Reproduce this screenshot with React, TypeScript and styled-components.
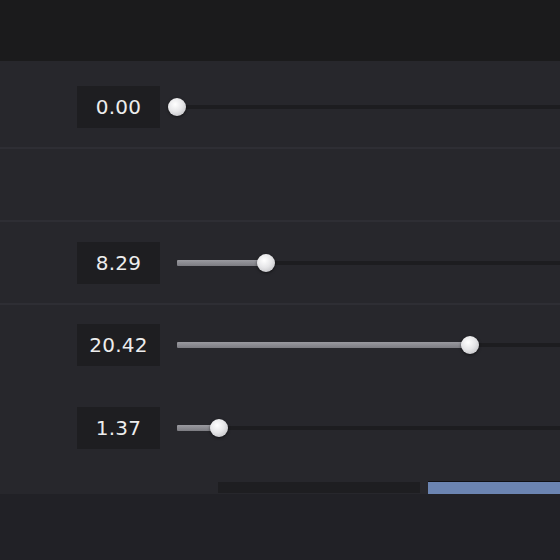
import React from "react"
import styled, { createGlobalStyle } from "styled-components"

const GlobalStyle = createGlobalStyle`
  html, body {
    margin: 0;
    padding: 0;
    background: #212126;
  }
  body {
    width: 560px;
    height: 560px;
    overflow: hidden;
    font-family: "DejaVu Sans", "Liberation Sans", sans-serif;
  }
`

const Page = styled.div`
  width: 560px;
  height: 560px;
  display: flex;
  flex-direction: column;
  overflow: hidden;
  background: #212126;
`

const TopBar = styled.div`
  height: 61px;
  flex-shrink: 0;
  background: #1b1b1c;
`

const Panel = styled.div`
  display: flex;
  flex-direction: column;
  background: #27272c;
`

const Section = styled.div<{ $height: number; $divider?: boolean }>`
  height: ${p => p.$height}px;
  flex-shrink: 0;
  display: flex;
  flex-direction: column;
  border-bottom: ${p => (p.$divider ? "2px solid #2e2e34" : "none")};
  box-sizing: border-box;
`

const Row = styled.div<{ $top: number }>`
  display: flex;
  align-items: center;
  padding-left: 77px;
  margin-top: ${p => p.$top}px;
`

const ValueBox = styled.div`
  width: 83px;
  height: 42px;
  flex-shrink: 0;
  display: flex;
  align-items: center;
  justify-content: center;
  background: #1e1e21;
  color: #ededed;
  font-size: 20px;
  letter-spacing: 0.2px;
`

const Track = styled.div`
  position: relative;
  margin-left: 17px;
  width: 600px;
  height: 4px;
  flex-shrink: 0;
  background: #1d1d20;
  border-radius: 2px;
`

const Fill = styled.div`
  position: absolute;
  left: 0;
  top: -1px;
  height: 6px;
  background: linear-gradient(#9a9aa0, #7c7c82);
  border-radius: 1px;
`

const Knob = styled.div`
  position: absolute;
  top: 50%;
  width: 18px;
  height: 18px;
  margin: -9px 0 0 -9px;
  border-radius: 50%;
  background: radial-gradient(circle at 40% 35%, #ffffff 0%, #e6e6e8 45%, #b4b4b8 100%);
  box-shadow: 0 1px 3px rgba(0, 0, 0, 0.55);
`

const Progress = styled.div`
  display: flex;
  align-items: center;
  gap: 8px;
  padding-left: 218px;
  margin-top: 32px;
`

const ProgressEmpty = styled.div`
  width: 202px;
  height: 11px;
  background: #1e1e21;
`

const ProgressFill = styled.div`
  flex: 1;
  height: 12px;
  background: #6b84b1;
  border-top: 1px solid #101014;
`

type SliderProps = { value: string; offset: number; top: number }

const SliderRow = ({ value, offset, top }: SliderProps) => (
  <Row $top={top}>
    <ValueBox>{value}</ValueBox>
    <Track>
      {offset > 0 && <Fill style={{ width: offset }} />}
      <Knob style={{ left: offset }} />
    </Track>
  </Row>
)

const App = () => (
  <Page>
    <GlobalStyle />
    <TopBar />
    <Panel>
      <Section $height={88} $divider>
        <SliderRow value="0.00" offset={0} top={25} />
      </Section>
      <Section $height={73} $divider />
      <Section $height={83} $divider>
        <SliderRow value="8.29" offset={89} top={20} />
      </Section>
      <Section $height={189}>
        <SliderRow value="20.42" offset={293} top={19} />
        <SliderRow value="1.37" offset={42} top={41} />
        <Progress>
          <ProgressEmpty />
          <ProgressFill />
        </Progress>
      </Section>
    </Panel>
  </Page>
)

export default App
